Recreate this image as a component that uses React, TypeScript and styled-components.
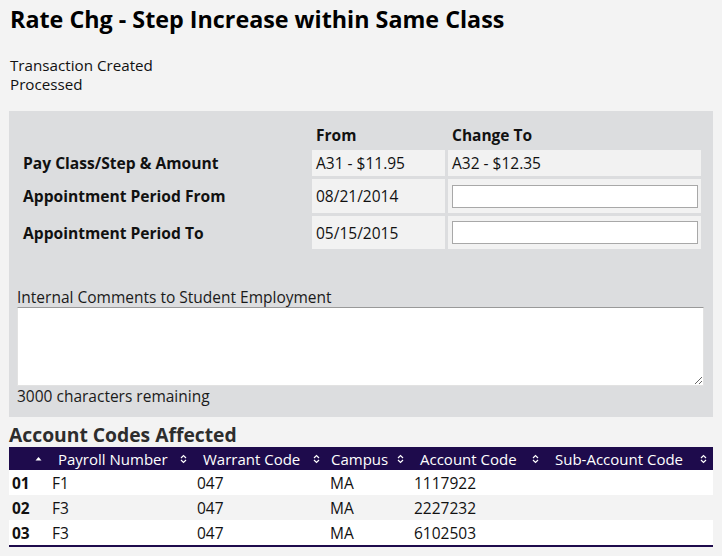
import styled, { createGlobalStyle } from 'styled-components';

interface AccountRow {
    id: string;
    payroll: string;
    warrant: string;
    campus: string;
    account: string;
    subAccount: string;
}

const accountRows: AccountRow[] = [
    { id: '01', payroll: 'F1', warrant: '047', campus: 'MA', account: '1117922', subAccount: '' },
    { id: '02', payroll: 'F3', warrant: '047', campus: 'MA', account: '2227232', subAccount: '' },
    { id: '03', payroll: 'F3', warrant: '047', campus: 'MA', account: '6102503', subAccount: '' },
];

// column widths of the account table (header + body share them)
const columns = [
    { key: 'id', label: '', width: 39, pad: 10, sorted: true },
    { key: 'payroll', label: 'Payroll Number', width: 145, pad: 10 },
    { key: 'warrant', label: 'Warrant Code', width: 133, pad: 10 },
    { key: 'campus', label: 'Campus', width: 84, pad: 5 },
    { key: 'account', label: 'Account Code', width: 135, pad: 10 },
    { key: 'subAccount', label: 'Sub-Account Code', width: 168, pad: 10 },
] as const;

const GlobalStyle = createGlobalStyle`
    html, body {
        margin: 0;
        padding: 0;
        background: #f3f3f3;
    }
    body {
        font-family: 'Open Sans', 'Noto Sans', sans-serif;
        color: #111;
    }
`;

function SortBoth() {
    return (
        <svg width="7" height="10" viewBox="0 0 7 10">
            <path d="M1 4 L3.5 1.5 L6 4" fill="none" stroke="#fff" strokeWidth="1.2" />
            <path d="M1 6 L3.5 8.5 L6 6" fill="none" stroke="#fff" strokeWidth="1.2" />
        </svg>
    );
}

function SortAsc() {
    return (
        <svg width="7" height="10" viewBox="0 0 7 10">
            <path d="M0.5 6.5 L3.5 3 L6.5 6.5 Z" fill="#fff" />
        </svg>
    );
}

function App() {
    return (
        <Page>
            <GlobalStyle />
            <Title>Rate Chg - Step Increase within Same Class</Title>

            <StatusList>
                <div>Transaction Created</div>
                <div>Processed</div>
            </StatusList>

            <Panel>
                <ChangeGrid>
                    <span />
                    <ColHead>From</ColHead>
                    <ColHead>Change To</ColHead>

                    <RowLabel>Pay Class/Step &amp; Amount</RowLabel>
                    <ValueCell>A31 - $11.95</ValueCell>
                    <ValueCell>A32 - $12.35</ValueCell>

                    <RowLabel>Appointment Period From</RowLabel>
                    <ValueCell>08/21/2014</ValueCell>
                    <ValueCell>
                        <TextInput type="text" />
                    </ValueCell>

                    <RowLabel>Appointment Period To</RowLabel>
                    <ValueCell>05/15/2015</ValueCell>
                    <ValueCell>
                        <TextInput type="text" />
                    </ValueCell>
                </ChangeGrid>

                <CommentLabel spaced>Internal Comments to Student Employment</CommentLabel>
                <Comments />
                <CommentLabel>3000 characters remaining</CommentLabel>
            </Panel>

            <SectionTitle>Account Codes Affected</SectionTitle>
            <AccountTable>
                <colgroup>
                    {columns.map((c) => (
                        <col key={c.key} style={{ width: c.width }} />
                    ))}
                </colgroup>
                <thead>
                    <tr>
                        {columns.map((c) => (
                            <HeadCell key={c.key} pad={c.pad}>
                                <HeadInner>
                                    <span>{c.label}</span>
                                    {'sorted' in c ? <SortAsc /> : <SortBoth />}
                                </HeadInner>
                            </HeadCell>
                        ))}
                    </tr>
                </thead>
                <tbody>
                    {accountRows.map((row, i) => (
                        <BodyRow key={row.id} striped={i % 2 === 1}>
                            <NumCell>{row.id}</NumCell>
                            <BodyCell>{row.payroll}</BodyCell>
                            <BodyCell>{row.warrant}</BodyCell>
                            <BodyCell>{row.campus}</BodyCell>
                            <BodyCell>{row.account}</BodyCell>
                            <BodyCell>{row.subAccount}</BodyCell>
                        </BodyRow>
                    ))}
                </tbody>
            </AccountTable>
        </Page>
    );
}

const Page = styled.div`
    padding: 0 9px;
    width: 704px;
`;

const Title = styled.h1`
    margin: 0;
    padding: 4px 0 0 1px;
    font-size: 23.3px;
    line-height: 30px;
    font-weight: 700;
    color: #000;
`;

const StatusList = styled.div`
    margin-top: 22px;
    padding-left: 1px;
    font-size: 15.2px;
    line-height: 19px;
`;

const Panel = styled.div`
    margin-top: 17px;
    background: #dcdddf;
    padding: 12px 9px 11px 8px;
`;

const ChangeGrid = styled.div`
    display: grid;
    grid-template-columns: 286px 133px 253px;
    grid-template-rows: 24px 26px 34px 33px;
    column-gap: 3px;
    row-gap: 3px;
    margin-left: 6px;
`;

const ColHead = styled.div`
    font-size: 15.5px;
    font-weight: 700;
    padding-left: 4px;
    display: flex;
    align-items: center;
`;

const RowLabel = styled.div`
    font-size: 15.6px;
    font-weight: 700;
    display: flex;
    align-items: center;
`;

const ValueCell = styled.div`
    background: #f2f2f2;
    font-size: 15.5px;
    display: flex;
    align-items: center;
    padding: 0 3px 0 4px;
`;

const TextInput = styled.input`
    box-sizing: border-box;
    width: 100%;
    height: 23px;
    margin: 0;
    border: 1px solid #a8a8a8;
    background: #fff;
    outline: none;
`;

const CommentLabel = styled.div<{ spaced?: boolean }>`
    margin-top: ${({ spaced }) => (spaced ? '38px' : '0')};
    font-size: 15.5px;
    line-height: 20px;
    color: #1a1a1a;
`;

const Comments = styled.textarea`
    display: block;
    box-sizing: border-box;
    width: 100%;
    height: 79px;
    margin: 0;
    border: 1px solid #e2e2e2;
    border-top-color: #999;
    background: #fff;
    resize: vertical;
    outline: none;
`;

const SectionTitle = styled.h2`
    margin: 6px 0 0;
    font-size: 19.3px;
    line-height: 24px;
    font-weight: 700;
    color: #2d2d2d;
`;

const AccountTable = styled.table`
    width: 704px;
    border-collapse: collapse;
    table-layout: fixed;
    border-bottom: 2px solid #1e0b4c;
`;

const HeadCell = styled.th<{ pad: number }>`
    background: #1e0b4c;
    color: #fff;
    font-size: 15px;
    font-weight: 400;
    height: 23px;
    padding: 0 6px 0 ${({ pad }) => pad}px;
    text-align: left;
`;

const HeadInner = styled.div`
    display: flex;
    align-items: center;
    justify-content: space-between;
`;

const BodyRow = styled.tr<{ striped: boolean }>`
    background: ${({ striped }) => (striped ? '#f3f3f3' : '#fff')};
`;

const BodyCell = styled.td`
    height: 25px;
    padding: 0 0 0 4px;
    font-size: 15.5px;
`;

const NumCell = styled(BodyCell)`
    font-weight: 700;
    padding-left: 3px;
`;

export default App;
